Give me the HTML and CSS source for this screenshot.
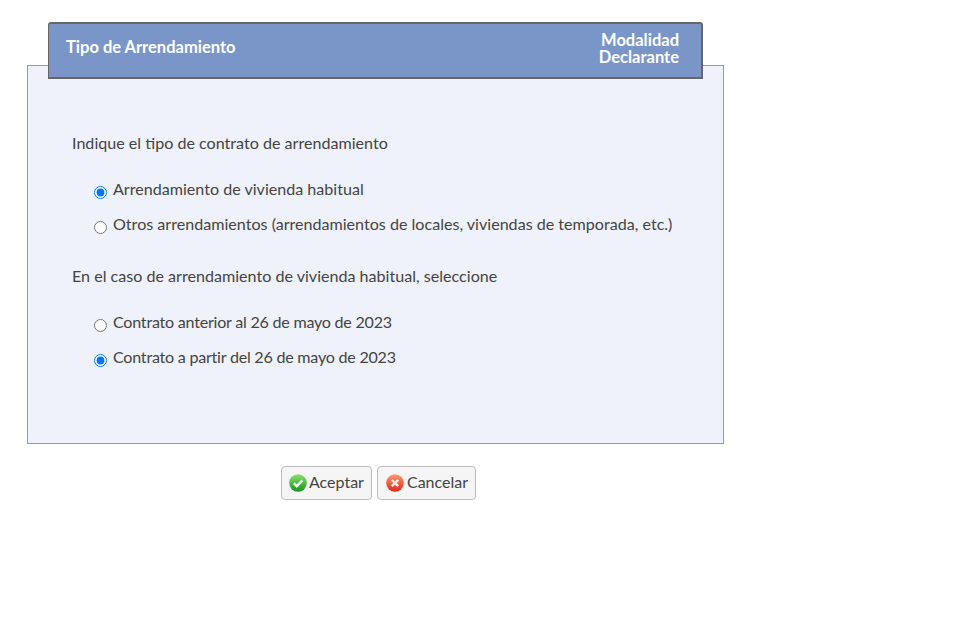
FILE: index.html
```html
<!DOCTYPE html>
<html lang="es">
<head>
    <meta charset="UTF-8">
    <title>Tipo de Arrendamiento</title>
    <link rel="stylesheet" href="styles.css">
</head>
<body>
    <div class="page">
        <div class="panel-header">
            <h1>Tipo de Arrendamiento</h1>
            <div class="modalidad">Modalidad<br>Declarante</div>
        </div>

        <form class="panel">
            <p class="question">Indique el tipo de contrato de arrendamiento</p>
            <label class="option"><input type="radio" name="tipo" checked>Arrendamiento de vivienda habitual</label>
            <label class="option"><input type="radio" name="tipo">Otros arrendamientos (arrendamientos de locales, viviendas de temporada, etc.)</label>

            <p class="question second">En el caso de arrendamiento de vivienda habitual, seleccione</p>
            <label class="option date"><input type="radio" name="fecha">Contrato anterior al 26 de mayo de 2023</label>
            <label class="option date"><input type="radio" name="fecha" checked>Contrato a partir del 26 de mayo de 2023</label>
        </form>

        <div class="button-container">
            <button type="button" class="btn">
                <svg viewBox="0 0 18 18" width="18" height="18">
                    <defs>
                        <linearGradient id="okFill" x1="0" y1="0" x2="0" y2="1">
                            <stop offset="0" stop-color="#8be06a"/>
                            <stop offset="1" stop-color="#14951f"/>
                        </linearGradient>
                    </defs>
                    <circle cx="9" cy="9" r="8.8" fill="url(#okFill)"/>
                    <path d="M4.8 9.2 7.8 12.2 13.4 6.3" fill="none" stroke="#eef5ea" stroke-width="2.4"/>
                </svg>
                Aceptar
            </button>
            <button type="button" class="btn btn-cancel">
                <svg viewBox="0 0 18 18" width="18" height="18">
                    <defs>
                        <linearGradient id="koFill" x1="0" y1="0" x2="0" y2="1">
                            <stop offset="0" stop-color="#ff9a6c"/>
                            <stop offset="1" stop-color="#e0261c"/>
                        </linearGradient>
                    </defs>
                    <circle cx="9" cy="9" r="8.8" fill="url(#koFill)"/>
                    <path d="M5.8 5.8 12.2 12.2M12.2 5.8 5.8 12.2" fill="none" stroke="#fbeee8" stroke-width="2.4"/>
                </svg>
                Cancelar
            </button>
        </div>
    </div>
</body>
</html>
```

FILE: styles.css
```css
* {
    margin: 0;
    padding: 0;
    box-sizing: border-box;
}

body {
    font-family: Lato, "Noto Sans", Arial, sans-serif;
    background-color: white;
    color: #444;
}

.page {
    width: 697px;
    margin-left: 27px;
    padding-top: 22px;
}

.panel-header {
    position: relative;
    display: flex;
    justify-content: space-between;
    align-items: center;
    height: 57px;
    margin: 0 21px -14px 21px;
    padding: 0 22px 4px 17px;
    background-color: #7a96c9;
    border: 1px solid #666;
    border-width: 2px 2px 2px 1px;
    border-radius: 3px 3px 0 0;
    color: white;
    font-weight: 700;
}

.panel-header h1 {
    margin-top: -4px;
    font-size: 16.5px;
}

.modalidad {
    font-size: 16.5px;
    line-height: 17px;
    text-align: right;
}

.panel {
    height: 379px;
    padding: 66px 44px 0 44px;
    background-color: #eff2fb;
    border: 1px solid #999;
}

.question {
    font-size: 16.1px;
    line-height: 22px;
    margin-bottom: 18px;
}

.question.second {
    margin-top: 23px;
}

.option {
    display: flex;
    align-items: center;
    height: 35px;
    padding: 0 0 2px 22px;
    font-size: 16.1px;
    white-space: nowrap;
}

.option.date {
    letter-spacing: -0.24px;
}

.option input {
    width: 13px;
    height: 13px;
    margin: 8px 6px 0 0;
}

.button-container {
    display: flex;
    gap: 5px;
    margin: 22px 0 0 254px;
}

.btn {
    display: flex;
    align-items: center;
    gap: 2px;
    height: 34px;
    padding: 0 7px 2px 7px;
    background-color: #f5f5f5;
    border: 1px solid #bbb;
    border-radius: 4px;
    color: #444;
    font-family: inherit;
    font-size: 16px;
    line-height: 18px;
}

.btn-cancel {
    gap: 3px;
    padding-left: 8px;
    padding-right: 7px;
}

.btn svg {
    margin-top: 2px;
}
```
